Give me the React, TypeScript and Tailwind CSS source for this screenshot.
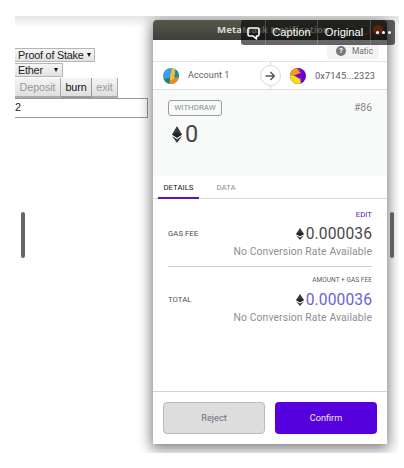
import React from "react";

function Eth({ className }: { className: string }) {
  return (
    <svg viewBox="0 0 20 32" className={className} fill="#393b3d" preserveAspectRatio="none">
      <path d="M10 0 20 16 10 22 0 16Z" />
      <path d="M0 19 10 25 20 19 10 32Z" />
      <path d="M0 16 10 12 20 16 10 22Z" fill="#202224" />
    </svg>
  );
}

function WebPage() {
  return (
    <div className="w-[138px] shrink-0 pt-8 text-[#222]">
      <div className="flex h-[14px] w-20 items-center justify-between border border-l-0 border-[#b5b5b5] bg-gradient-to-b from-[#f5f5f5] to-[#e2e2e2] pr-[3px] pl-[3px] leading-none">
        <span className="whitespace-nowrap text-[10.8px] tracking-[-0.2px]">Proof of Stake</span>
        <svg viewBox="0 0 6 6" className="h-1 w-1 shrink-0"><path d="M0 0H6L3 6Z" fill="#111" /></svg>
      </div>
      <div className="mt-[1px] flex h-[14px] w-12 items-center justify-between border border-l-0 border-[#b5b5b5] bg-gradient-to-b from-[#f5f5f5] to-[#e2e2e2] pr-1 pl-[3px] text-[10.8px] leading-none tracking-[-0.2px]">
        <span>Ether</span>
        <svg viewBox="0 0 6 6" className="h-1 w-1 shrink-0"><path d="M0 0H6L3 6Z" fill="#111" /></svg>
      </div>
      <div className="mt-[1px] flex h-[20px] text-[10.8px] leading-none tracking-[-0.1px]">
        <button className="w-[46px] border-r-[1.5px] border-b-2 border-[#aaa] bg-gradient-to-b from-[#f4f4f4] to-[#dfdfdf] text-[#999]">Deposit</button>
        <button className="w-[31px] border-r-[1.5px] border-b-2 border-[#999] bg-gradient-to-b from-[#f4f4f4] to-[#dfdfdf] text-[#111]">burn</button>
        <button className="w-[26px] border-r-[1.5px] border-b-2 border-[#aaa] bg-gradient-to-b from-[#f4f4f4] to-[#dfdfdf] text-[#999]">exit</button>
      </div>
      <div className="flex h-[20px] w-[133px] items-center border border-l-0 border-[#999] bg-white pb-[2px] text-[10.8px] leading-none">2</div>
    </div>
  );
}

function Fee({ label, note, noteClass, amountClass }: { label: string; note: string; noteClass: string; amountClass: string }) {
  return (
    <div className="flex justify-between">
      <div className="pt-[21px] text-[7.8px] leading-[10px] text-[#4b4d57]">{label}</div>
      <div className="flex flex-col items-end">
        <div className={noteClass}>{note}</div>
        <div className={amountClass}>
          <Eth className="mr-[2px] h-3 w-2" />
          <span>0.000036</span>
        </div>
        <div className="mt-[2px] text-[10.4px] leading-[14px] tracking-[0.1px] whitespace-nowrap text-[#8c8e94]">No Conversion Rate Available</div>
      </div>
    </div>
  );
}

function Popup() {
  return (
    <div className="mt-1 flex h-[424px] w-[234px] shrink-0 flex-col overflow-hidden rounded-t-[4px] bg-white font-[Roboto,sans-serif] shadow-[0_3px_13px_2px_rgba(0,0,0,0.5)]">
      <div className="h-5 shrink-0 bg-gradient-to-b from-[#5b5b50] to-[#3d3e37] pl-16 font-['Open_Sans',sans-serif] text-[9.6px] leading-[20px] font-bold tracking-[0.1px] text-[#dedbd2]">
        MetaMask Notification
      </div>
      <div className="flex h-[22px] shrink-0 justify-end border-b border-[#e4e4e4] pr-2">
        <div className="mt-[3px] flex h-4 w-[52px] items-center rounded-[2px] bg-[#f4f4f5] pl-[9px] text-[8.4px] text-[#6f7177]">
          <span className="flex h-[10px] w-[10px] items-center justify-center rounded-full bg-[#77797e] text-[8px] font-bold text-white">?</span>
          <span className="ml-[6px]">Matic</span>
        </div>
      </div>
      <div className="flex h-7 shrink-0 items-center border-b border-[#dcdfe1] text-[9px] text-[#5b5d67]">
        <svg viewBox="0 0 16 16" className="ml-[10px] h-4 w-4">
          <clipPath id="first-account"><circle cx="8" cy="8" r="8" /></clipPath>
          <g clipPath="url(#first-account)">
            <path d="M0 0H16V16H0Z" fill="#429be9" />
            <path d="M9 0H13L11 12 6 13Z" fill="#f2be3b" />
            <path d="M12.5 0 16 3V11L11.5 9Z" fill="#178f91" />
            <path d="M0 11 7 9.5 7 16H0Z" fill="#168b75" />
            <path d="M7 12.5 16 8.5V16H6Z" fill="#f58620" />
          </g>
        </svg>
        <span className="mt-[1px] ml-[9px] w-[72px] tracking-[0.1px]">Account 1</span>
        <div className="flex h-[27px] w-5 flex-col items-center">
          <div className="h-[3px] w-px bg-[#d4d6d9]" />
          <div className="flex h-[21px] w-[21px] shrink-0 items-center justify-center rounded-full border border-[#d7d9dc] bg-white">
            <svg viewBox="0 0 12 12" className="h-3 w-3" fill="none" stroke="#55575c" strokeWidth="1.4"><path d="M1.5 6H10M6.5 2 10.3 6 6.5 10" /></svg>
          </div>
          <div className="h-[3px] w-px bg-[#d4d6d9]" />
        </div>
        <svg viewBox="0 0 16 16" className="ml-[10px] h-4 w-4">
          <clipPath id="second-account"><circle cx="8" cy="8" r="8" /></clipPath>
          <g clipPath="url(#second-account)">
            <path d="M0 0H16V16H0Z" fill="#6803d7" />
            <path d="M0 0H8L11 5 5 7 0 9Z" fill="#f49a1b" />
            <path d="M7 0H11L10 5Z" fill="#a7208c" />
            <path d="M0 7.5 10 8 11 16H0Z" fill="#f3df0b" />
            <path d="M4 7.5H10V11Z" fill="#6803d7" />
          </g>
        </svg>
        <span className="ml-[9px] text-[9.3px] tracking-[0.08px]">0x7145...2323</span>
      </div>
      <div className="flex h-[86px] shrink-0 justify-between bg-[#f8faf9] pt-[10px] pr-[15px] pl-[15px]">
        <div>
          <div className="flex h-4 w-[54px] items-center justify-center rounded-[3px] border border-[#999ba2] text-[7.9px] text-[#8b8d94]">WITHDRAW</div>
          <div className="mt-[6px] flex items-center pl-[4px] text-[23.5px] leading-[25px] text-[#454648]">
            <Eth className="mr-[3px] h-[17px] w-[10px]" />
            <span>0</span>
          </div>
        </div>
        <div className="text-[10.4px] leading-[15px] text-[#85878e]">#86</div>
      </div>
      <div className="flex h-[23px] shrink-0 border-b border-[#d8d9db] pl-[5px] text-[7.8px] leading-[23px]">
        <div className="h-[23px] w-[41px] border-b-2 border-[#5714b8] text-center text-[#141618]">DETAILS</div>
        <div className="w-[54px] text-center text-[#8b8d94]">DATA</div>
      </div>
      <div className="flex flex-1 flex-col pt-[9px] pr-[15px] pl-[15px]">
        <Fee
          label="GAS FEE"
          note="EDIT"
          noteClass="h-3 text-[7.8px] leading-[13px] text-[#5714b8]"
          amountClass="mt-[5px] flex items-center text-[15.6px] leading-[18px] tracking-[0.1px] text-[#47484b]"
        />
        <div className="mt-[7px] mb-[7px] h-px shrink-0 bg-[#cfcfd2]" />
        <Fee
          label="TOTAL"
          note="AMOUNT + GAS FEE"
          noteClass="h-3 text-[6.6px] leading-[13px] text-[#5b5d67]"
          amountClass="mt-[5px] flex items-center text-[15.6px] leading-[18px] tracking-[0.1px] text-[#6762d8]"
        />
      </div>
      <div className="flex h-[53px] shrink-0 justify-between border-t border-[#d2d3d5] px-[10px] pt-[10px] text-[9.2px]">
        <button className="h-8 w-[102px] rounded-[4px] border-[1.5px] border-[#b9b9b9] bg-[#dddddd] text-[#6b6d78]">Reject</button>
        <button className="h-8 w-[102px] rounded-[4px] bg-[#5600dd] text-[#eee7fb]">Confirm</button>
      </div>
    </div>
  );
}

function Toolbar() {
  return (
    <div className="absolute top-1 left-[226px] flex h-[25px] w-[154px] rounded-[3px] bg-black/60 text-[11.2px] leading-[25px] text-white">
      <div className="flex w-[25px] items-center justify-center border-r border-white/20">
        <svg viewBox="0 0 13 13" className="mt-px h-[13px] w-[13px]" fill="none" stroke="white" strokeWidth="1.6" strokeLinejoin="round"><path d="M2.5 1H10.5Q12 1 12 2.5V7.5Q12 9 10.5 9H9.5V12L6 9H2.5Q1 9 1 7.5V2.5Q1 1 2.5 1Z" /></svg>
      </div>
      <div className="w-[52px] border-r border-white/20 text-center">Caption</div>
      <div className="w-[53px] border-r border-white/20 text-center">Original</div>
      <div className="flex w-6 items-center justify-center gap-[3px]">
        <i className="h-[3px] w-[3px] rounded-full bg-white" />
        <i className="h-[3px] w-[3px] rounded-full bg-white" />
        <i className="h-[3px] w-[3px] rounded-full bg-white" />
      </div>
    </div>
  );
}

export default function App() {
  return (
    <div className="h-[468px] w-[404px] bg-white pt-4 pl-[15px] font-['Liberation_Sans',sans-serif]">
      <div className="relative flex h-[437px] w-[384px] overflow-hidden bg-white">
        <WebPage />
        <Popup />
        <div className="pointer-events-none absolute inset-x-0 top-0 h-3 bg-gradient-to-b from-black/10 to-transparent" />
        <div className="absolute top-[9px] left-[332px] flex gap-[3px]">
          <i className="h-[10px] w-[10px] rounded-full border border-[#77776c] bg-[#4a4b43]" />
          <i className="h-[10px] w-[10px] rounded-full border border-[#77776c] bg-[#4a4b43]" />
          <i className="h-[10px] w-[10px] rounded-full bg-[#e75b25]" />
        </div>
        <Toolbar />
        <div className="absolute top-[196px] left-[6px] h-[46px] w-1 rounded-full bg-[#676767]" />
        <div className="absolute top-[196px] left-[375px] h-[46px] w-1 rounded-full bg-[#606060]" />
      </div>
    </div>
  );
}
